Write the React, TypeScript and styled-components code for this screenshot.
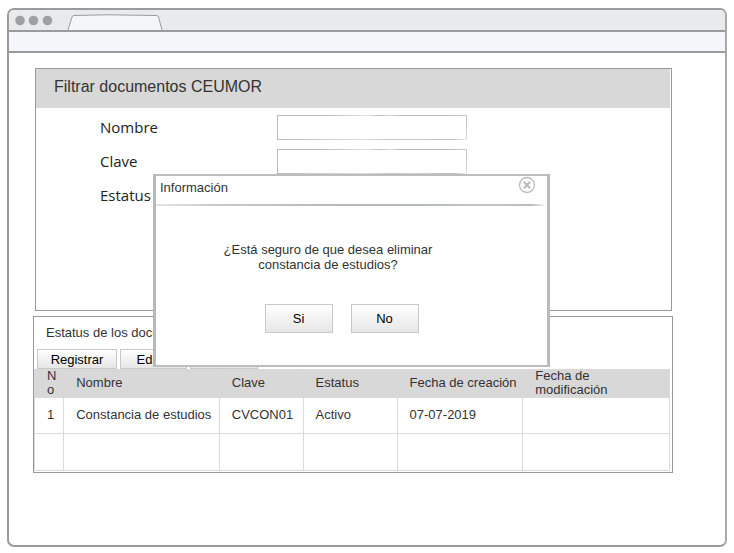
import React from 'react';
import styled, { createGlobalStyle } from 'styled-components';

const Global = createGlobalStyle`
  * { box-sizing: border-box; }
  body { margin: 0; background: #fff; font-family: "Liberation Sans", Arial, sans-serif; font-size: 13px; color: #333; }
`;

const edge = '#989c9f';

const Page = styled.div`
  min-height: 100vh;
  padding: 8px 7px 6px;
  display: flex;
`;

const Frame = styled.div`
  flex: 1;
  display: flex;
  flex-direction: column;
  border: 2px solid ${edge};
  border-right-color: #a6aaad;
  border-radius: 7px;
  overflow: hidden;
`;

const TitleBar = styled.header`
  display: flex;
  align-items: flex-end;
  height: 22px;
  background: #e8eaec;
  border-bottom: 2px solid ${edge};
`;

const Dots = styled.svg`
  width: 40px;
  height: 20px;
  margin-left: 6px;
`;

const Tab = styled.svg`
  width: 96px;
  height: 16px;
  margin-left: 12px;
`;

const AddressBar = styled.div`
  height: 21px;
  background: #f5f6f9;
  border-bottom: 2px solid ${edge};
`;

const Content = styled.main`
  position: relative;
  display: flex;
  flex-direction: column;
  gap: 5px;
  padding: 15px 52px 70px 24px;
`;

const FilterPanel = styled.section`
  margin: 0 1px 0 2px;
  min-height: 243px;
  border: 1px solid #999;
`;

const PanelTitle = styled.h1`
  margin: 0 1px 0 0;
  padding: 0 18px;
  font-size: 16px;
  font-weight: 400;
  line-height: 36px;
  height: 39px;
  background: #d8d8d8;
`;

const FilterForm = styled.form`
  display: grid;
  grid-template-columns: 177px 190px;
  row-gap: 9px;
  align-items: center;
  padding: 7px 64px;
`;

const FieldLabel = styled.label`
  font-family: "Open Sans", sans-serif;
  font-size: 15px;
  line-height: 25px;
  color: #222;
`;

const sketchBox = `
  width: 100%;
  height: 25px;
  border: 0;
  padding: 0 6px;
  font: inherit;
  background:
    linear-gradient(90deg, #bbb 25%, #e2e2e2 48%, #bbb 54%, #ddd 60%, #bbb 64%, #bbb 90%, #ccc) top / 100% 1px no-repeat,
    linear-gradient(90deg, #bbb, #ddd 45%, #c5cace 58%, #ccc 75%, #bbb 92%, #eee) bottom / 100% 1px no-repeat,
    linear-gradient(#bbb, #bbb) left / 1px 100% no-repeat,
    linear-gradient(#bbb, #ddd) right / 1px 100% no-repeat,
    #fff;
`;

const TextField = styled.input`${sketchBox}`;
const SelectField = styled.select`${sketchBox}`;

const ResultsPanel = styled.section`
  border: 1px solid #999;
  padding: 0 2px 1px 0;
`;

const ResultsTitle = styled.h2`
  margin: 0;
  padding: 0 12px;
  font-size: 13px;
  font-weight: 400;
  line-height: 32px;
`;

const Toolbar = styled.div`
  display: flex;
  gap: 3px;
  padding-left: 3px;
`;

const Button = styled.button<{ $w: number; $h: number }>`
  width: ${p => p.$w}px;
  height: ${p => p.$h}px;
  padding: 0;
  border: 1px solid #c9c9c9;
  background: linear-gradient(#fff, #e6e6e6);
  font: inherit;
  color: #000;
`;

const Table = styled.table`
  width: 100%;
  table-layout: fixed;
  border-collapse: collapse;
  th, td {
    padding: 0 0 0 12px;
    text-align: left;
    font-weight: 400;
    border: 1px solid #dadada;
    overflow-wrap: anywhere;
  }
  th {
    height: 28px;
    background: #d8d8d8;
    line-height: 14px;
    border-top: 0;
    border-bottom: 0;
  }
  th:first-child { padding-right: 6px; }
  th:last-child { padding-right: 24px; }
  td { height: 36px; line-height: 15px; padding-bottom: 2px; }
  tr:last-child td { height: 37px; }
`;

const Col = styled.col<{ $w: number }>`
  width: ${p => p.$w}%;
`;

const Dialog = styled.div`
  position: absolute;
  top: 121px;
  left: 144px;
  width: 397px;
  background: #fff;
  border-style: solid;
  border-width: 2px 3px;
  border-color: #bbbdbf #b8bbbd #b8bdc0 #b5b9bc;
  padding-bottom: 32px;
`;

const DialogHeader = styled.div`
  display: flex;
  justify-content: space-between;
  padding: 0 11px 0 4px;
  height: 30px;
  line-height: 24px;
  background: linear-gradient(90deg, #e4e4e4, #c8caca 15%, #bbb 40%, #b4b9bb 65%, #c5c5c5 85%, #bbb 96%, #fff) bottom / 100% 2px no-repeat;
`;

const DialogTitle = styled.h2`
  margin: 0;
  font-size: 13px;
  font-weight: 400;
`;

const Close = styled.button`
  width: 18px;
  height: 18px;
  padding: 0;
  border: 0;
  background: none;
  svg { display: block; }
`;

const Message = styled.p`
  width: 230px;
  margin: 36px 0 32px 57px;
  text-align: center;
  line-height: 15px;
`;

const Actions = styled.div`
  display: flex;
  justify-content: center;
  gap: 18px;
  padding-right: 20px;
`;

const widths = [4.6, 24.5, 13.2, 14.8, 19.8, 23.1];
const headers = ['No', 'Nombre', 'Clave', 'Estatus', 'Fecha de creación', 'Fecha de modificación'];
const rows = [
  ['1', 'Constancia de estudios', 'CVCON01', 'Activo', '07-07-2019', ''],
  ['', '', '', '', '', ''],
];

export default function App() {
  return (
    <>
      <Global />
      <Page>
        <Frame>
          <TitleBar>
            <Dots viewBox="0 0 40 20" fill="#9da1a4" aria-hidden="true">
              <circle cx="5" cy="10.5" r="4.8" />
              <circle cx="18.5" cy="10.5" r="4.8" />
              <circle cx="32.5" cy="10.5" r="4.8" />
            </Dots>
            <Tab viewBox="0 0 96 16" aria-hidden="true">
              <path d="M1 16 5 3Q5.5 1.5 7 1.5L40 .8 89 1.5Q91 1.5 91.5 3L95 16" fill="#f5f6f9" stroke={edge} />
            </Tab>
          </TitleBar>
          <AddressBar />
          <Content>
            <FilterPanel>
              <PanelTitle>Filtrar documentos CEUMOR</PanelTitle>
              <FilterForm>
                <FieldLabel htmlFor="nombre">Nombre</FieldLabel>
                <TextField id="nombre" />
                <FieldLabel htmlFor="clave">Clave</FieldLabel>
                <TextField id="clave" />
                <FieldLabel htmlFor="estatus">Estatus</FieldLabel>
                <SelectField id="estatus" />
              </FilterForm>
            </FilterPanel>
            <ResultsPanel>
              <ResultsTitle>Estatus de los documentos</ResultsTitle>
              <Toolbar>
                <Button $w={80} $h={20}>Registrar</Button>
                <Button $w={67} $h={20}>Editar</Button>
                <Button $w={68} $h={20}>Eliminar</Button>
              </Toolbar>
              <Table>
                <colgroup>{widths.map((w, i) => <Col key={i} $w={w} />)}</colgroup>
                <thead>
                  <tr>{headers.map(h => <th key={h}>{h}</th>)}</tr>
                </thead>
                <tbody>
                  {rows.map((row, r) => (
                    <tr key={r}>{row.map((cell, c) => <td key={c}>{cell}</td>)}</tr>
                  ))}
                </tbody>
              </Table>
            </ResultsPanel>
            <Dialog role="dialog" aria-labelledby="dialog-title">
              <DialogHeader>
                <DialogTitle id="dialog-title">Información</DialogTitle>
                <Close aria-label="Cerrar">
                  <svg width="18" height="18" viewBox="0 0 18 18" fill="none" stroke="#b9bcbf">
                    <circle cx="9" cy="9" r="7.5" strokeWidth="1.3" />
                    <path d="M5.8 5.8 12.2 12.2M12.2 5.8 5.8 12.2" strokeWidth="2.2" />
                  </svg>
                </Close>
              </DialogHeader>
              <Message>¿Está seguro de que desea eliminar constancia de estudios?</Message>
              <Actions>
                <Button $w={68} $h={29}>Si</Button>
                <Button $w={68} $h={29}>No</Button>
              </Actions>
            </Dialog>
          </Content>
        </Frame>
      </Page>
    </>
  );
}
